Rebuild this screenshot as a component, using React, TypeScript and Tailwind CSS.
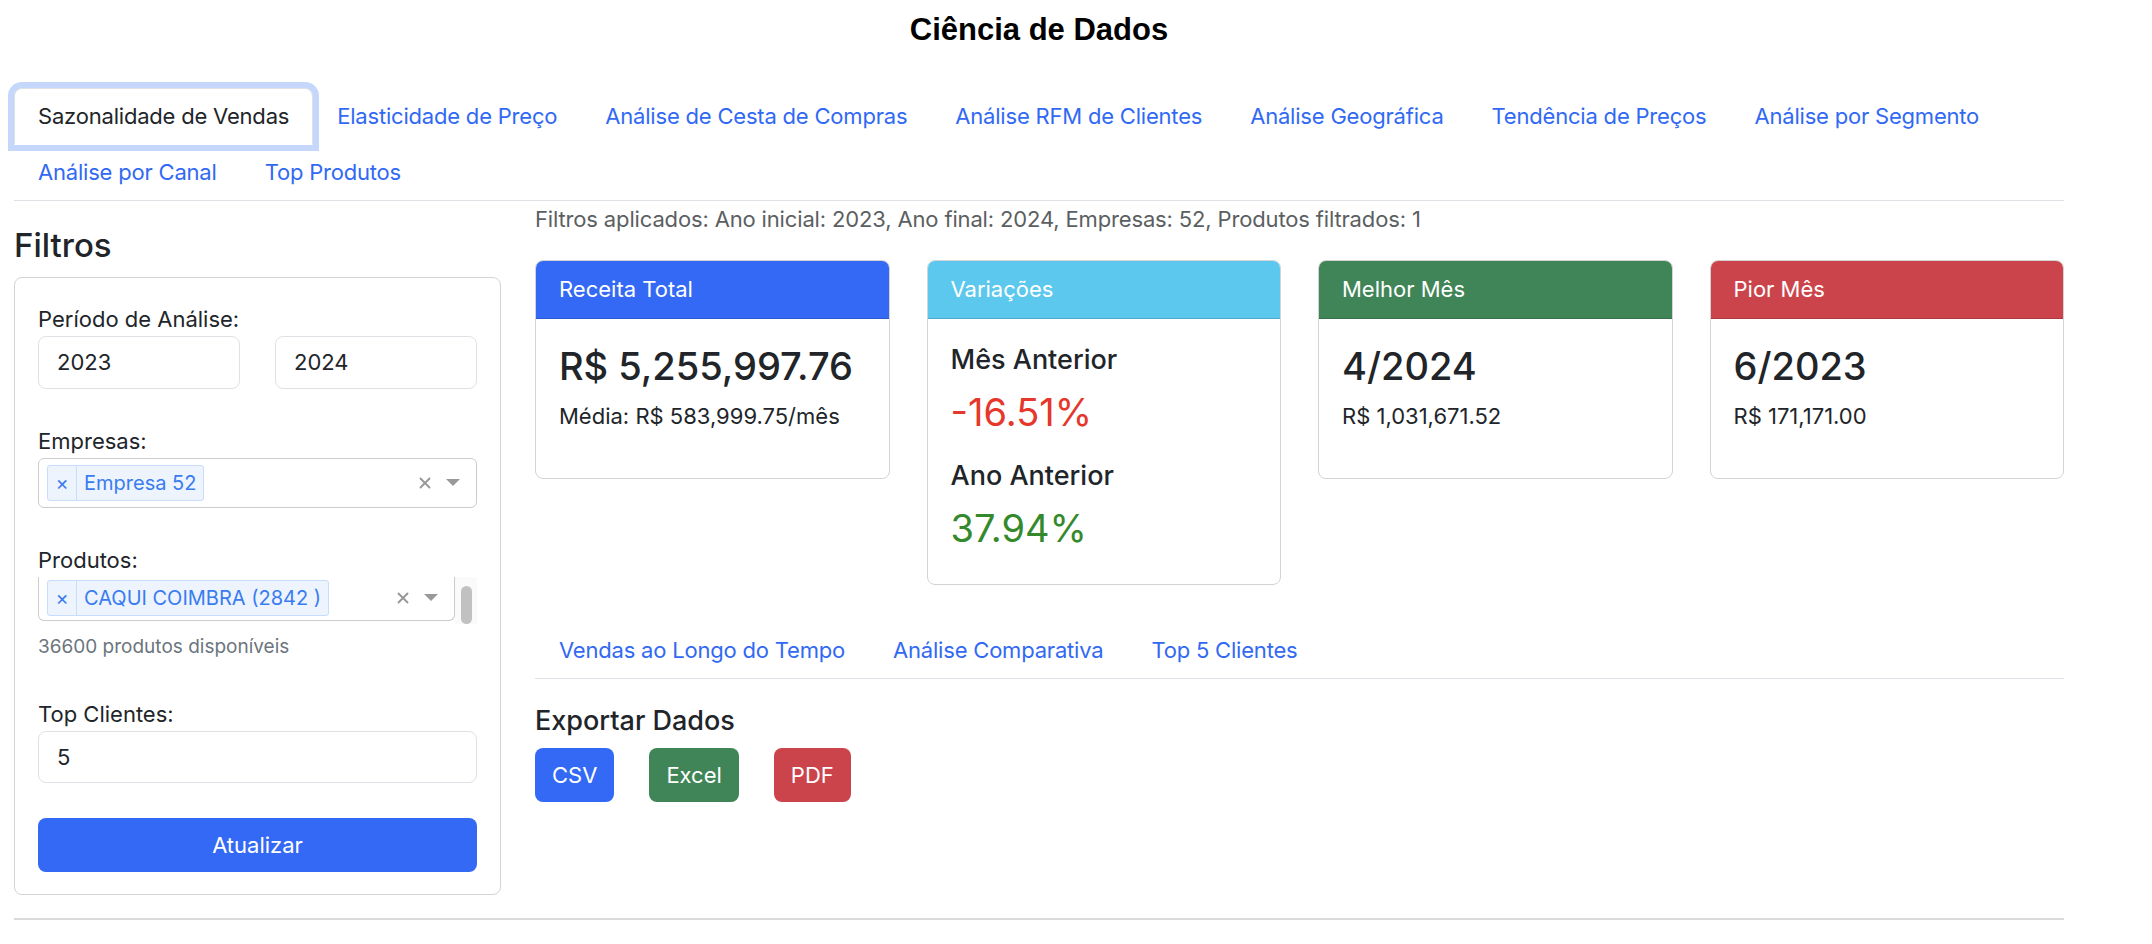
import { X } from 'lucide-react';

const topRow1 = [
  'Sazonalidade de Vendas',
  'Elasticidade de Preço',
  'Análise de Cesta de Compras',
  'Análise RFM de Clientes',
  'Análise Geográfica',
  'Tendência de Preços',
  'Análise por Segmento',
];
const topRow2 = ['Análise por Canal', 'Top Produtos'];
const subTabs = ['Vendas ao Longo do Tempo', 'Análise Comparativa', 'Top 5 Clientes'];

function Tab({ label, active }: { label: string; active?: boolean }) {
  return (
    <div
      className={
        active
          ? 'relative z-10 -mb-px px-[23px] py-[11px] leading-[33px] text-[22px] tracking-[-0.2px] text-[#212529] bg-white border border-[#dee2e6] border-b-white rounded-t-[8px] shadow-[0_0_0_6px_#c5d7fa]'
          : '-mb-px px-[23px] py-[11px] leading-[33px] text-[22px] tracking-[-0.2px] text-[#3169f4] border border-transparent rounded-t-[8px]'
      }
    >
      {label}
    </div>
  );
}

function Caret() {
  return (
    <svg width="14" height="8" viewBox="0 0 14 8">
      <path d="M0 0 L14 0 L7 7 Z" fill="#999" />
    </svg>
  );
}

function Tag({ label }: { label: string }) {
  return (
    <div className="flex h-[36px] items-stretch rounded-[3px] border border-[#c8dcfb] bg-[#edf4fe] text-[20px] text-[#3a7cf0]">
      <span className="flex w-[29px] items-center justify-center border-r border-[#c8dcfb] text-[20px]">×</span>
      <span className="flex items-center px-[7px]">{label}</span>
    </div>
  );
}

function MetricCard({
  title,
  header,
  children,
}: {
  title: string;
  header: string;
  children: React.ReactNode;
}) {
  return (
    <div className="overflow-hidden rounded-[8px] border border-[#d3d3d3] bg-white">
      <div className={`flex h-[58px] items-center border-b border-black/15 px-[23px] text-[22px] text-white ${header}`}>
        {title}
      </div>
      <div className="px-[23px] pt-[24px] pb-[23px]">{children}</div>
    </div>
  );
}

export default function App() {
  return (
    <div className="min-h-screen bg-white font-['Inter',sans-serif] text-[#212529]">
      <div className="ml-[14px] w-[2050px]">
        <h1 className="pt-[11px] mb-[39px] text-center font-['Liberation_Sans',Arial,sans-serif] text-[31px] font-bold leading-[38px] text-black">
          Ciência de Dados
        </h1>

        <div className="flex flex-col border-b border-[#dee2e6]">
          <div className="flex">
            {topRow1.map((t, i) => (
              <Tab key={t} label={t} active={i === 0} />
            ))}
          </div>
          <div className="flex">
            {topRow2.map((t) => (
              <Tab key={t} label={t} />
            ))}
          </div>
        </div>

        <div className="flex gap-[34px]">
          {/* sidebar */}
          <div className="w-[487px] shrink-0">
            <h4 className="mt-[24px] mb-[12px] text-[33px] font-medium leading-[40px]">Filtros</h4>
            <div className="rounded-[8px] border border-[#d3d3d3] px-[23px] pt-[25px] pb-[22px] text-[22px]">
              <div className="leading-[33px]">Período de Análise:</div>
              <div className="flex gap-[35px]">
                <div className="flex h-[53px] flex-1 items-center rounded-[8px] border border-[#dee2e6] px-[18px]">2023</div>
                <div className="flex h-[53px] flex-1 items-center rounded-[8px] border border-[#dee2e6] px-[18px]">2024</div>
              </div>

              <div className="mt-[36px] leading-[33px]">Empresas:</div>
              <div className="flex h-[50px] items-center rounded-[6px] border border-[#cccccc] pl-[8px] pr-[16px]">
                <Tag label="Empresa 52" />
                <div className="flex-1" />
                <X size={18} strokeWidth={2.5} className="text-[#999]" />
                <div className="ml-[12px]">
                  <Caret />
                </div>
              </div>

              <div className="mt-[36px] leading-[33px]">Produtos:</div>
              <div className="flex h-[47px]">
                <div className="flex h-[44px] flex-1 items-start rounded-b-[6px] border-x border-b border-[#cccccc] pl-[8px] pr-[16px] pt-[3px]">
                  <Tag label="CAQUI COIMBRA (2842 )" />
                  <div className="flex-1" />
                  <div className="flex h-[36px] items-center">
                    <X size={18} strokeWidth={2.5} className="text-[#999]" />
                    <div className="ml-[12px]">
                      <Caret />
                    </div>
                  </div>
                </div>
                <div className="flex w-[22px] justify-center bg-[#fafafa] pt-[9px]">
                  <div className="h-[38px] w-[11px] rounded-full bg-[#c1c1c1]" />
                </div>
              </div>
              <div className="mt-[9px] text-[19px] leading-[28px] text-[#6c757d]">36600 produtos disponíveis</div>

              <div className="mt-[37px] leading-[33px]">Top Clientes:</div>
              <div className="flex h-[52px] items-center rounded-[8px] border border-[#dee2e6] px-[18px]">5</div>

              <button className="mt-[35px] h-[54px] w-full rounded-[8px] bg-[#3369f4] text-[22px] text-white">
                Atualizar
              </button>
            </div>
          </div>

          {/* main */}
          <div className="flex-1 pt-[2px]">
            <div className="text-[22px] leading-[33px] tracking-[-0.15px] text-[#5c5f62]">
              Filtros aplicados: Ano inicial: 2023, Ano final: 2024, Empresas: 52, Produtos filtrados: 1
            </div>

            <div className="mt-[24px] grid grid-cols-4 items-start gap-[37px]">
              <MetricCard title="Receita Total" header="bg-[#3369f4]">
                <div className="mb-[11px] text-[38px] font-medium leading-[46px]">R$ 5,255,997.76</div>
                <div className="mb-[22px] text-[22px] leading-[33px]">Média: R$ 583,999.75/mês</div>
              </MetricCard>

              <MetricCard title="Variações" header="bg-[#5cc8ed]">
                <div className="mb-[13px] text-[27px] font-medium leading-[33px]">Mês Anterior</div>
                <div className="mb-[24px] text-[38px] leading-[46px] text-[#e5372c]">-16.51%</div>
                <div className="mb-[13px] text-[27px] font-medium leading-[33px]">Ano Anterior</div>
                <div className="mb-[10px] text-[38px] leading-[46px] text-[#348a2b]">37.94%</div>
              </MetricCard>

              <MetricCard title="Melhor Mês" header="bg-[#3f8558]">
                <div className="mb-[11px] text-[38px] font-medium leading-[46px]">4/2024</div>
                <div className="mb-[22px] text-[22px] leading-[33px]">R$ 1,031,671.52</div>
              </MetricCard>

              <MetricCard title="Pior Mês" header="bg-[#cc444b]">
                <div className="mb-[11px] text-[38px] font-medium leading-[46px]">6/2023</div>
                <div className="mb-[22px] text-[22px] leading-[33px]">R$ 171,171.00</div>
              </MetricCard>
            </div>

            <div className="mt-[37px] flex border-b border-[#dee2e6]">
              {subTabs.map((t) => (
                <Tab key={t} label={t} />
              ))}
            </div>

            <h5 className="mt-[25px] text-[27px] font-medium leading-[33px]">Exportar Dados</h5>
            <div className="mt-[11px] flex gap-[35px]">
              <button className="h-[54px] rounded-[8px] bg-[#3369f4] px-[17px] text-[22px] text-white">CSV</button>
              <button className="h-[54px] rounded-[8px] bg-[#3f8558] px-[17px] text-[22px] text-white">Excel</button>
              <button className="h-[54px] rounded-[8px] bg-[#cc444b] px-[17px] text-[22px] text-white">PDF</button>
            </div>
          </div>
        </div>

        <div className="mt-[23px] h-[2px] bg-[#dadada]" />
      </div>
    </div>
  );
}
